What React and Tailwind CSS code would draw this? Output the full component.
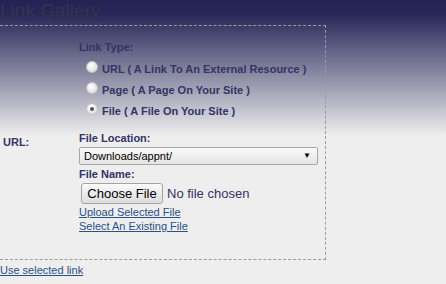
const RadioOption = ({ label, checked }) => (
  <div className="flex items-center h-[21px]">
    <span className="ml-[7px] mb-[5px] w-[12px] h-[12px] rounded-full border border-[#c2c2c2] bg-[radial-gradient(circle_at_40%_35%,#ffffff,#d4d4d4)] flex items-center justify-center shrink-0">
      {checked && <span className="w-[4px] h-[4px] rounded-full bg-[#555]" />}
    </span>
    <span className="ml-[4px] leading-[13px] font-bold">{label}</span>
  </div>
);

const App = () => (
  <div className="w-[446px] h-[284px] overflow-hidden font-['Liberation_Sans',Arial,sans-serif] text-[11px] text-[#333366] bg-[linear-gradient(to_bottom,#222255_0px,#272759_14px,#eeeeee_136px)]">
    <div className="text-[19px] leading-[22px] text-[#34344a] font-normal whitespace-nowrap">Link Gallery</div>

    <div className="mt-[3px] ml-[-10px] w-[336px] border border-dashed border-[#9a9a9a] flex items-center">
      <div className="w-[88px] pl-[12px] font-bold leading-[13px]">URL:</div>

      <div className="flex-1 pt-[15px] pb-[26px]">
        <div className="font-bold leading-[13px]">Link Type:</div>
        <div className="mt-[5px]">
          <RadioOption label="URL ( A Link To An External Resource )" />
          <RadioOption label="Page ( A Page On Your Site )" />
          <RadioOption label="File ( A File On Your Site )" checked />
        </div>

        <div className="mt-[10px] font-bold leading-[13px]">File Location:</div>
        <div className="mt-[2px] w-[239px] h-[18px] rounded-[2px] border border-[#a8a8a8] bg-[linear-gradient(to_bottom,#fafafa,#e4e4e4)] flex items-center justify-between pl-[4px] pr-[6px] text-black">
          <span className="leading-[13px]">Downloads/appnt/</span>
          <span className="text-[8px] leading-none">▼</span>
        </div>

        <div className="mt-[3px] font-bold leading-[13px]">File Name:</div>
        <div className="mt-[2px] flex items-center">
          <button className="ml-[2px] w-[82px] h-[21px] rounded-[3px] border border-[#a3a3a3] bg-[linear-gradient(to_bottom,#fbfbfb,#dcdcdc)] text-[13px] leading-none text-black">
            Choose File
          </button>
          <span className="ml-[4px] text-[13px] leading-none">No file chosen</span>
        </div>

        <div className="mt-[1px] flex flex-col items-start leading-[14px] text-[#2b4f87]">
          <a className="underline cursor-pointer">Upload Selected File</a>
          <a className="underline cursor-pointer">Select An Existing File</a>
        </div>
      </div>
    </div>

    <a className="block mt-[4px] leading-[13px] underline text-[#2b4f87] cursor-pointer">Use selected link</a>
  </div>
);

export default App;
